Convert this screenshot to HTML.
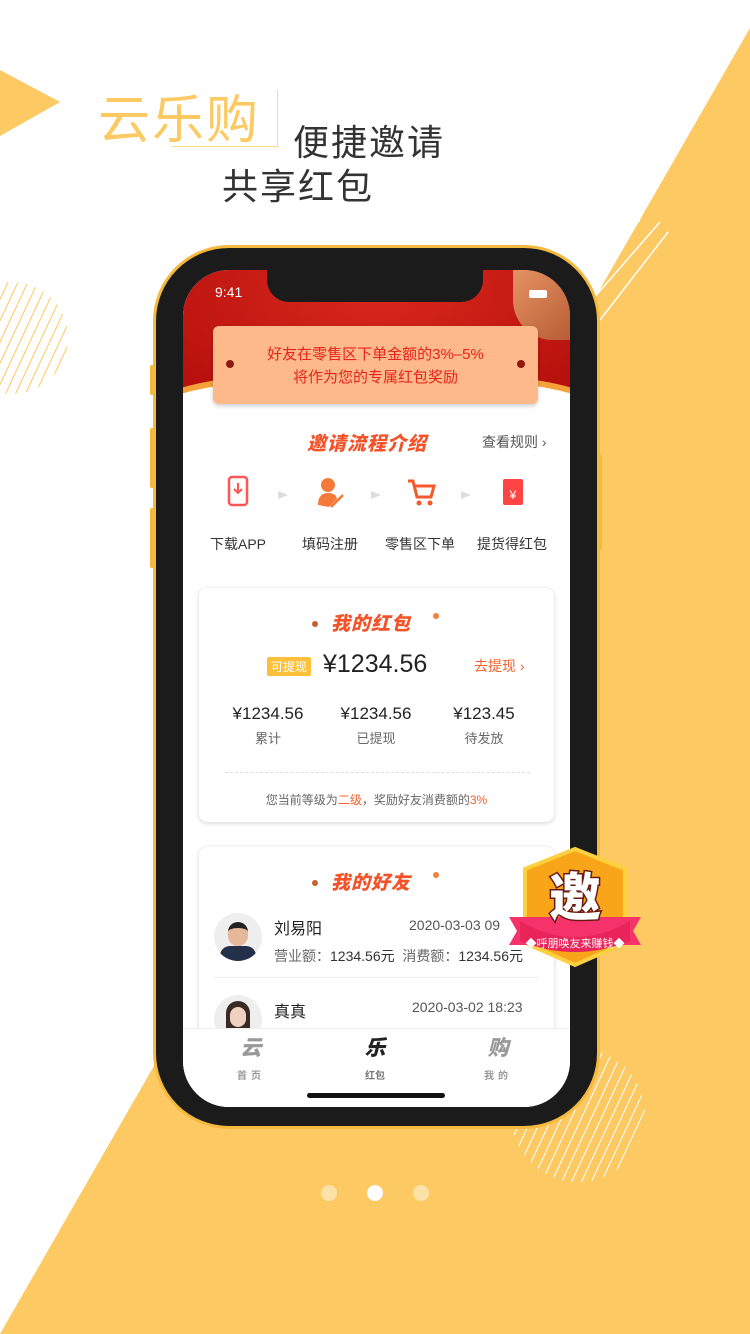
<!DOCTYPE html>
<html><head><meta charset="utf-8"><style>
*{margin:0;padding:0;box-sizing:border-box}
body{width:750px;height:1334px;position:relative;overflow:hidden;background:#fff;font-family:"Liberation Sans","Noto Sans CJK SC",sans-serif;color:#333}
.a{position:absolute}
.c{text-align:center}
.t{font-weight:900;font-style:italic;color:#f4532a;font-size:19px;letter-spacing:1px}
.dot{width:6px;height:6px;border-radius:3px;background:#c9602e}
</style></head><body>
<svg class="a" style="left:0;top:0" width="750" height="1334">
<defs>
<clipPath id="c1"><circle cx="12" cy="338" r="56"/></clipPath>
<clipPath id="c2"><circle cx="578" cy="1115" r="67"/></clipPath>
<pattern id="p1" width="9" height="9" patternUnits="userSpaceOnUse" patternTransform="rotate(25)"><line x1="0" y1="0" x2="0" y2="9" stroke="#fdc962" stroke-width="2"/></pattern>
<pattern id="p2" width="9" height="9" patternUnits="userSpaceOnUse" patternTransform="rotate(25)"><line x1="0" y1="0" x2="0" y2="9" stroke="#fff" stroke-width="2"/></pattern>
</defs>
<polygon points="750,28 750,1334 0,1334" fill="#fdc962"/>
<polygon points="0,70 60,102 0,136" fill="#fdc962"/>
<rect x="0" y="270" width="80" height="140" fill="url(#p1)" clip-path="url(#c1)"/>
<rect x="500" y="1040" width="160" height="150" fill="url(#p2)" clip-path="url(#c2)"/>
<g stroke="#fff" stroke-width="1.5"><line x1="565" y1="270" x2="612" y2="220"/><line x1="580" y1="285" x2="640" y2="220"/><line x1="592" y1="300" x2="660" y2="222"/><line x1="600" y1="320" x2="668" y2="232"/></g>
</svg>
<div class="a" style="left:98px;top:78px;font-size:52px;color:#fdc962;letter-spacing:2px">云乐购</div>
<div class="a" style="left:172px;top:146px;width:106px;height:1px;background:#fdd98a"></div>
<div class="a" style="left:277px;top:90px;width:1px;height:57px;background:#fdd98a"></div>
<div class="a" style="left:293px;top:114px;font-size:36px;color:#333;letter-spacing:2px">便捷邀请</div>
<div class="a" style="left:222px;top:158px;font-size:36px;color:#333;letter-spacing:2px">共享红包</div>

<!-- phone -->
<div class="a" style="left:150px;top:365px;width:8px;height:30px;background:#f5b93e;border-radius:2px"></div>
<div class="a" style="left:150px;top:428px;width:8px;height:60px;background:#f5b93e;border-radius:2px"></div>
<div class="a" style="left:150px;top:508px;width:8px;height:60px;background:#f5b93e;border-radius:2px"></div>
<div class="a" style="left:594px;top:455px;width:8px;height:95px;background:#f5b93e;border-radius:2px"></div>
<div class="a" style="left:153px;top:245px;width:447px;height:884px;border-radius:76px;background:#1b1b1b;border:3px solid #f5b93e"></div>
<div class="a" style="left:183px;top:270px;width:387px;height:837px;border-radius:46px;background:#fff;overflow:hidden">
 <div class="a" style="left:0;top:0;width:387px;height:118px;background:radial-gradient(ellipse at 50% 20%,#d8281c,#b50f0c)"></div>
 <div class="a" style="left:-20px;top:100px;width:427px;height:60px;border-radius:50% 50% 0 0/30px 30px 0 0;background:#f5a23a"></div>
 <div class="a" style="left:-20px;top:106px;width:427px;height:60px;border-radius:50% 50% 0 0/30px 30px 0 0;background:#fff"></div>
 <div class="a" style="left:330px;top:0;width:57px;height:70px;background:linear-gradient(135deg,#e8a06c,#b8653a);border-radius:0 0 0 40px;opacity:.9"></div>
 <div class="a" style="left:32px;top:14px;color:#fff;font-size:14px">9:41</div>
 <div class="a" style="left:346px;top:20px;width:18px;height:8px;background:#fff;border-radius:2px"></div>
 <div class="a" style="left:30px;top:56px;width:325px;height:78px;background:#fdb98a;border-radius:6px;box-shadow:0 2px 4px rgba(0,0,0,.2)"></div>
 <div class="a" style="left:43px;top:90px;width:8px;height:8px;border-radius:4px;background:#8e1a10"></div>
 <div class="a" style="left:334px;top:90px;width:8px;height:8px;border-radius:4px;background:#8e1a10"></div>
 <div class="a c" style="left:30px;top:73px;width:325px;color:#e8231b;font-size:15px;line-height:23px">好友在零售区下单金额的3%–5%<br>将作为您的专属红包奖励</div>
 <div class="a t" style="left:124px;top:159px">邀请流程介绍</div>
 <div class="a" style="left:299px;top:162px;font-size:14px;color:#555">查看规则 ›</div>
 <svg class="a" style="left:0;top:205px" width="387" height="40">
  <rect x="46" y="2" width="18" height="28" rx="3" fill="none" stroke="#f55" stroke-width="2.5"/><path d="M55 8v10M51 14l4 4 4-4" stroke="#f55" stroke-width="2" fill="none"/>
  <circle cx="145" cy="10" r="7" fill="#f57a3a"/><path d="M135 30q0-12 10-12q8 0 9 6l-8 8z" fill="#f57a3a"/><path d="M148 32l12-12" stroke="#f57a3a" stroke-width="2.5"/>
  <path d="M225 6h5l4 16h14l3-11h-19" stroke="#f55a2a" stroke-width="3" fill="none"/><circle cx="236" cy="28" r="2.5" fill="#f55a2a"/><circle cx="247" cy="28" r="2.5" fill="#f55a2a"/>
  <rect x="320" y="4" width="20" height="26" rx="2" fill="#f44"/><text x="330" y="24" font-size="12" fill="#fff" text-anchor="middle">¥</text>
  <path d="M95 16l10 4-10 4z M188 16l10 4-10 4z M278 16l10 4-10 4z" fill="#ddd"/>
 </svg>
 <div class="a" style="left:27px;top:264px;font-size:14px;color:#333">下载APP</div>
 <div class="a" style="left:119px;top:264px;font-size:14px;color:#333">填码注册</div>
 <div class="a" style="left:202px;top:264px;font-size:14px;color:#333">零售区下单</div>
 <div class="a" style="left:294px;top:264px;font-size:14px;color:#333">提货得红包</div>

 <div class="a" style="left:16px;top:318px;width:355px;height:234px;border-radius:8px;background:#fff;box-shadow:0 1px 5px rgba(0,0,0,.18)"></div>
 <div class="a dot" style="left:129px;top:351px"></div><div class="a dot" style="left:250px;top:343px;background:#f5803a"></div>
 <div class="a t" style="left:148px;top:339px">我的红包</div>
 <div class="a" style="left:84px;top:387px;padding:1px 4px;background:#fdc03a;color:#fff;font-size:12px;border-radius:2px">可提现</div>
 <div class="a" style="left:140px;top:380px;font-size:25px;color:#222">¥1234.56</div>
 <div class="a" style="left:291px;top:386px;font-size:14px;color:#f5602a">去提现 ›</div>
 <div class="a c" style="left:35px;top:434px;width:100px;font-size:17px;color:#222">¥1234.56<br><span style="font-size:13px;color:#666;line-height:30px">累计</span></div>
 <div class="a c" style="left:143px;top:434px;width:100px;font-size:17px;color:#222">¥1234.56<br><span style="font-size:13px;color:#666;line-height:30px">已提现</span></div>
 <div class="a c" style="left:251px;top:434px;width:100px;font-size:17px;color:#222">¥123.45<br><span style="font-size:13px;color:#666;line-height:30px">待发放</span></div>
 <div class="a" style="left:42px;top:502px;width:305px;border-top:1px dashed #ddd"></div>
 <div class="a c" style="left:16px;top:521px;width:355px;font-size:12px;color:#666">您当前等级为<span style="color:#f5602a">二级</span>，奖励好友消费额的<span style="color:#f5602a">3%</span></div>

 <div class="a" style="left:16px;top:577px;width:355px;height:280px;border-radius:8px;background:#fff;box-shadow:0 1px 5px rgba(0,0,0,.18)"></div>
 <div class="a dot" style="left:129px;top:610px"></div><div class="a dot" style="left:250px;top:602px;background:#f5803a"></div>
 <div class="a t" style="left:148px;top:598px">我的好友</div>
 <div class="a" style="left:31px;top:643px;width:48px;height:48px;border-radius:24px;background:#eee;overflow:hidden"><div class="a" style="left:14px;top:9px;width:20px;height:24px;border-radius:10px;background:#e6b89a;border-top:6px solid #222"></div><div class="a" style="left:6px;top:33px;width:36px;height:20px;border-radius:10px 10px 0 0;background:#24304a"></div></div>
 <div class="a" style="left:91px;top:645px;font-size:16px;color:#222">刘易阳</div>
 <div class="a" style="left:226px;top:647px;font-size:14px;color:#555">2020-03-03 09</div>
 <div class="a" style="left:91px;top:676px;font-size:14px;color:#666">营业额：<span style="color:#333">1234.56元</span> &nbsp;消费额：<span style="color:#333">1234.56元</span></div>
 <div class="a" style="left:31px;top:707px;width:325px;height:1px;background:#eee"></div>
 <div class="a" style="left:31px;top:725px;width:48px;height:48px;border-radius:24px;background:#eee;overflow:hidden"><div class="a" style="left:12px;top:6px;width:24px;height:40px;border-radius:12px;background:#3a2a22"></div><div class="a" style="left:16px;top:12px;width:16px;height:20px;border-radius:8px;background:#f0d0c0"></div></div>
 <div class="a" style="left:91px;top:728px;font-size:16px;color:#222">真真</div>
 <div class="a" style="left:229px;top:729px;font-size:14px;color:#555">2020-03-02 18:23</div>

 <div class="a" style="left:0;top:758px;width:387px;height:79px;background:#fff;border-top:1px solid #eee"></div>
 <div class="a c" style="left:38px;top:767px;width:60px;font-size:21px;font-weight:900;font-style:italic;color:#999;line-height:24px">云<br><span style="font-size:10px;font-style:normal;font-weight:bold;letter-spacing:4px">首页</span></div>
 <div class="a c" style="left:162px;top:767px;width:60px;font-size:21px;font-weight:900;font-style:italic;color:#333;line-height:24px"><span style="color:#222">乐</span><br><span style="font-size:10px;font-style:normal;font-weight:bold;color:#777">红包</span></div>
 <div class="a c" style="left:285px;top:767px;width:60px;font-size:21px;font-weight:900;font-style:italic;color:#999;line-height:24px">购<br><span style="font-size:10px;font-style:normal;font-weight:bold;letter-spacing:4px">我的</span></div>
 <div class="a" style="left:124px;top:823px;width:138px;height:5px;border-radius:3px;background:#111"></div>
</div>
<div class="a" style="left:267px;top:268px;width:216px;height:34px;background:#1b1b1b;border-radius:0 0 22px 22px"></div>

<!-- badge -->
<svg class="a" style="left:505px;top:845px" width="140" height="130">
 <polygon points="70,4 120,24 120,98 70,120 20,98 20,24" fill="#f8a51a" stroke="#fdd040" stroke-width="4"/>
 <polygon points="4,72 136,72 128,86 136,100 4,100 12,86" fill="#f5336a"/>
 <path d="M15 76 Q70 108 125 76 L125 96 Q70 118 15 96Z" fill="#e8245a"/>
</svg>
<div class="a c" style="left:505px;top:856px;width:140px;font-size:52px;font-weight:900;color:#fff;-webkit-text-stroke:3px #6a1a12;paint-order:stroke">邀</div>
<div class="a c" style="left:505px;top:935px;width:140px;font-size:11px;color:#fff">◆呼朋唤友来赚钱◆</div>

<div class="a" style="left:321px;top:1185px;width:16px;height:16px;border-radius:8px;background:#fde2a8"></div>
<div class="a" style="left:367px;top:1185px;width:16px;height:16px;border-radius:8px;background:#fff"></div>
<div class="a" style="left:413px;top:1185px;width:16px;height:16px;border-radius:8px;background:#fde2a8"></div>
</body></html>
